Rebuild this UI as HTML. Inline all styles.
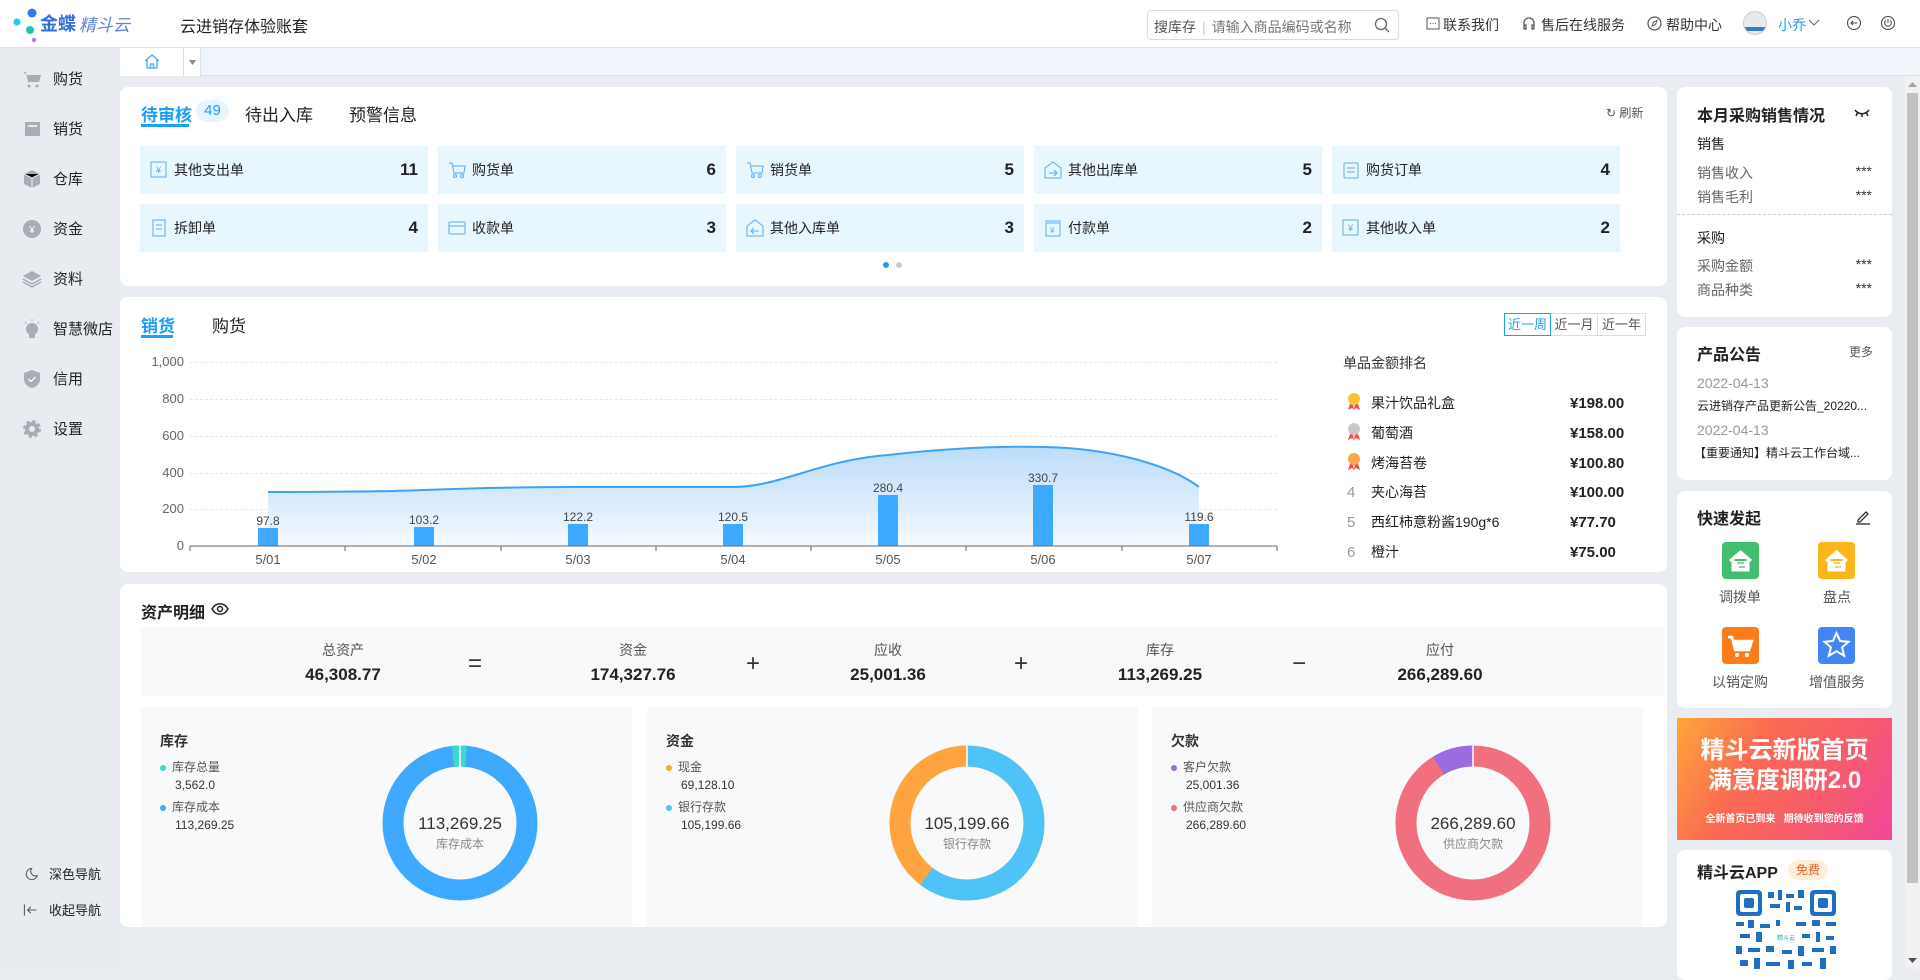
<!DOCTYPE html>
<html><head><meta charset="utf-8">
<style>
*{margin:0;padding:0;box-sizing:border-box}
body{width:1920px;height:969px;overflow:hidden;background:#e9ecf1;font-family:"Liberation Sans","Noto Sans CJK SC",sans-serif;color:#222;position:relative;font-size:14px}
.abs{position:absolute}
.hdr{left:0;top:0;width:1920px;height:48px;background:#fff;border-bottom:1px solid #dde1e6}
.side{left:0;top:48px;width:120px;height:921px;background:#e8ebf0}
.si{position:absolute;left:22px;font-size:15px;color:#222;display:flex;align-items:center}
.si svg{width:20px;height:20px;margin-right:11px}
.card{position:absolute;background:#fff;border-radius:8px}
.tile{position:absolute;width:288px;height:48px;background:#e8f6fd;display:flex;align-items:center;font-size:14px}
.tile svg{margin-left:10px;margin-right:6px}
.tile b{position:absolute;right:10px;font-size:17px;color:#222}
.ylab{position:absolute;right:1743px;font-size:13px;color:#666;text-align:right;width:50px}
.grid{position:absolute;left:190px;width:1087px;border-top:1px dashed #e3e6ee}
.rk{position:absolute;left:1343px;width:300px;height:22px;font-size:14px;display:flex;align-items:center}
.rk .n{width:28px;color:#999;font-size:15px;padding-left:4px}
.rk .p{position:absolute;left:227px;font-weight:bold;font-size:15px}
.sum{position:absolute;text-align:center;width:200px}
.sum .l{font-size:14px;color:#555}
.sum .v{font-size:17px;font-weight:bold;margin-top:5px}
.op{position:absolute;top:650px;font-size:24px;color:#333}
.pn{position:absolute;top:707px;width:491px;height:220px;background:#f8f9fa}
.pn .t{position:absolute;left:19px;top:24px;font-size:14px;font-weight:bold;color:#333}
.lg{position:absolute;left:19px;font-size:12px;color:#555}
.lg i{display:inline-block;width:6px;height:6px;border-radius:50%;margin-right:6px;vertical-align:middle}
.lv{position:absolute;left:34px;font-size:12px;color:#333}
.rt{position:absolute;left:1697px;font-size:14px;color:#666}
.st{position:absolute;right:48px;font-size:14px;color:#333}
.qi{position:absolute;width:37px;height:37px;border-radius:4px}
.ql{position:absolute;width:90px;text-align:center;font-size:14px;color:#555}
</style></head><body>
<div class="abs hdr">
  <svg class="abs" style="left:12px;top:8px" width="30" height="36"><circle cx="20" cy="5" r="4.5" fill="#2f7cf6"/><circle cx="5" cy="14" r="3.5" fill="#22ccee"/><circle cx="18" cy="22" r="4" fill="#18c3b8"/><circle cx="22" cy="32" r="2.2" fill="#a47cf7"/></svg>
  <div class="abs" style="left:40px;top:10px;font-size:18px;font-weight:bold;color:#2f6fdc">金蝶</div>
  <div class="abs" style="left:79px;top:11px;font-size:17px;color:#5b86d8;font-style:italic">精斗云</div>
  <div class="abs" style="left:180px;top:13px;font-size:16px;color:#222">云进销存体验账套</div>
  <div class="abs" style="left:1147px;top:10px;width:252px;height:30px;border:1px solid #d8dbe0;border-radius:4px;font-size:14px;color:#555;padding:6px 6px">搜库存<span style="color:#ccc;margin:0 6px">|</span><span style="color:#777">请输入商品编码或名称</span>
    <svg class="abs" style="right:8px;top:6px" width="16" height="16"><circle cx="7" cy="7" r="5.5" stroke="#666" stroke-width="1.3" fill="none"/><path d="M11 11l4 4" stroke="#666" stroke-width="1.3"/></svg></div>
  <svg class="abs" style="left:1426px;top:17px" width="14" height="14"><rect x="1" y="1" width="12" height="11" stroke="#555" fill="none"/><path d="M4 6.5h1M6.5 6.5h1M9 6.5h1" stroke="#555"/></svg>
  <div class="abs" style="left:1443px;top:15px;font-size:14px;color:#333">联系我们</div>
  <svg class="abs" style="left:1522px;top:16px" width="14" height="16"><path d="M2 9V7a5 5 0 0110 0v2M2 9h2v4H2zM10 9h2v4h-2z" stroke="#555" fill="none" stroke-width="1.3"/></svg>
  <div class="abs" style="left:1541px;top:15px;font-size:14px;color:#333">售后在线服务</div>
  <svg class="abs" style="left:1647px;top:16px" width="15" height="15"><circle cx="7.5" cy="7.5" r="6.5" stroke="#555" fill="none" stroke-width="1.2"/><path d="M5 10l1.5-4 3.5-1.5-1.5 4z" stroke="#555" fill="none"/></svg>
  <div class="abs" style="left:1666px;top:15px;font-size:14px;color:#333">帮助中心</div>
  <div class="abs" style="left:1743px;top:11px;width:24px;height:24px;border-radius:50%;background:#e6e9ee;border:1px solid #ccc;overflow:hidden"><div style="margin-top:15px;height:4px;background:#3a78c8"></div></div>
  <div class="abs" style="left:1778px;top:15px;font-size:14px;color:#1a9ef5">小乔</div>
  <svg class="abs" style="left:1808px;top:19px" width="12" height="8"><path d="M1 1l5 5 5-5" stroke="#666" fill="none"/></svg>
  <svg class="abs" style="left:1846px;top:15px" width="16" height="16"><circle cx="8" cy="8" r="6.5" stroke="#444" fill="none"/><path d="M11 8H5M7 6L5 8l2 2" stroke="#444" fill="none"/></svg>
  <svg class="abs" style="left:1880px;top:15px" width="16" height="16"><circle cx="8" cy="8" r="6.5" stroke="#444" fill="none"/><path d="M8 4v4M5.7 5.5a3.3 3.3 0 104.6 0" stroke="#444" fill="none"/></svg>
</div>
<div class="abs side"></div>
<div class="si" style="top:68px"><svg viewBox="0 0 20 20"><path d="M1 3h3l2 10h11l2-7H5" fill="#a6adb4"/><circle cx="7" cy="17" r="1.5" fill="#a6adb4"/><circle cx="15" cy="17" r="1.5" fill="#a6adb4"/></svg>购货</div>
<div class="si" style="top:118px"><svg viewBox="0 0 20 20"><rect x="3" y="3" width="15" height="14" fill="#a6adb4"/><rect x="6" y="6" width="9" height="2" fill="#e8ebf0"/></svg>销货</div>
<div class="si" style="top:168px"><svg viewBox="0 0 20 20"><path d="M10 1l8 4v10l-8 4-8-4V5z" fill="#a6adb4"/><path d="M2 5l8 4 8-4M10 9v10" stroke="#e8ebf0"/></svg>仓库</div>
<div class="si" style="top:218px"><svg viewBox="0 0 20 20"><circle cx="10" cy="10" r="9" fill="#a6adb4"/><text x="10" y="14" font-size="10" fill="#fff" text-anchor="middle">¥</text></svg>资金</div>
<div class="si" style="top:268px"><svg viewBox="0 0 20 20"><path d="M10 2l9 5-9 5-9-5z" fill="#a6adb4"/><path d="M1 10l9 5 9-5M1 13l9 5 9-5" stroke="#a6adb4" fill="none" stroke-width="1.5"/></svg>资料</div>
<div class="si" style="top:318px"><svg viewBox="0 0 20 20"><circle cx="10" cy="10" r="6" fill="#a6adb4"/><rect x="7" y="14" width="6" height="5" fill="#a6adb4"/><path d="M10 0v2M3 3l1.5 1.5M17 3l-1.5 1.5" stroke="#a6adb4"/></svg>智慧微店</div>
<div class="si" style="top:368px"><svg viewBox="0 0 20 20"><path d="M10 1l8 3v6c0 5-4 8-8 9-4-1-8-4-8-9V4z" fill="#a6adb4"/><path d="M6.5 10l2.5 2.5 4.5-4.5" stroke="#fff" fill="none" stroke-width="1.3"/></svg>信用</div>
<div class="si" style="top:418px"><svg viewBox="0 0 20 20"><circle cx="10" cy="10" r="7" fill="#a6adb4" stroke="#a6adb4" stroke-width="4" stroke-dasharray="3 2.5"/><circle cx="10" cy="10" r="3" fill="#e8ebf0"/></svg>设置</div>
<div class="si" style="top:864px;font-size:13px"><svg viewBox="0 0 20 20" style="width:16px;height:16px"><path d="M12 3a7 7 0 107 9 6 6 0 01-7-9z" stroke="#555" fill="none" stroke-width="1.3"/></svg>深色导航</div>
<div class="si" style="top:900px;font-size:13px"><svg viewBox="0 0 20 20" style="width:16px;height:16px"><path d="M3 3v14M18 10H7M11 6l-4 4 4 4" stroke="#555" fill="none" stroke-width="1.3"/></svg>收起导航</div>
<div class="abs" style="left:120px;top:48px;width:1800px;height:28px;background:#f0f5fc;border-bottom:1px solid #dde1e6"></div>
<div class="abs" style="left:120px;top:48px;width:64px;height:28px;background:#fff;border-right:1px solid #dde1e6"><svg class="abs" style="left:24px;top:6px" width="16" height="15"><path d="M1 7l7-6 7 6M3 6v8h10V6M6.5 14v-4h3v4" stroke="#3aa6f5" fill="none" stroke-width="1.2"/></svg></div>
<div class="abs" style="left:184px;top:48px;width:17px;height:28px;background:#fff;border-right:1px solid #dde1e6"><svg class="abs" style="left:5px;top:12px" width="7" height="5"><path d="M0 0h7L3.5 5z" fill="#888"/></svg></div>
<div class="card" style="left:120px;top:87px;width:1547px;height:199px"></div>
<div class="abs" style="left:141px;top:101px;font-size:17px;color:#1a9ef5;font-weight:bold">待审核</div>
<div class="abs" style="left:141px;top:124px;width:48px;height:3px;background:#1aa3f5"></div>
<div class="abs" style="left:196px;top:100px;width:33px;height:22px;border-radius:11px;background:#e8f5fe;color:#1a9ef5;font-size:15px;text-align:center;line-height:22px">49</div>
<div class="abs" style="left:245px;top:101px;font-size:17px;color:#222">待出入库</div>
<div class="abs" style="left:349px;top:101px;font-size:17px;color:#222">预警信息</div>
<div class="abs" style="left:1606px;top:104px;font-size:12px;color:#555">&#8635; 刷新</div>
<div class="tile" style="left:140px;top:146px"><svg width="18" height="18"><rect x="1" y="1" width="15" height="15" stroke="#5aaef0" fill="none"/><text x="6" y="12" font-size="9" fill="#5aaef0">¥</text></svg>其他支出单<b>11</b></div>
<div class="tile" style="left:438px;top:146px"><svg width="18" height="18"><path d="M1 2h3l2 10h10l1-7H5" stroke="#5aaef0" fill="none"/><circle cx="7" cy="15" r="1.5" stroke="#5aaef0" fill="none"/><circle cx="14" cy="15" r="1.5" stroke="#5aaef0" fill="none"/></svg>购货单<b>6</b></div>
<div class="tile" style="left:736px;top:146px"><svg width="18" height="18"><path d="M1 2h3l2 10h10l1-7H5" stroke="#5aaef0" fill="none"/><circle cx="7" cy="15" r="1.5" stroke="#5aaef0" fill="none"/><circle cx="14" cy="15" r="1.5" stroke="#5aaef0" fill="none"/></svg>销货单<b>5</b></div>
<div class="tile" style="left:1034px;top:146px"><svg width="18" height="18"><path d="M1 7l8-6 8 6v10H1z" stroke="#5aaef0" fill="none"/><path d="M5 12h8M10 9l3 3-3 3" stroke="#5aaef0" fill="none"/></svg>其他出库单<b>5</b></div>
<div class="tile" style="left:1332px;top:146px"><svg width="18" height="18"><rect x="2" y="2" width="14" height="15" rx="1" stroke="#5aaef0" fill="none"/><path d="M5 7h8M5 11h8" stroke="#5aaef0"/></svg>购货订单<b>4</b></div>
<div class="tile" style="left:140px;top:204px"><svg width="18" height="18"><rect x="3" y="1" width="12" height="16" stroke="#5aaef0" fill="none"/><path d="M6 6h6M6 10h6" stroke="#5aaef0"/></svg>拆卸单<b>4</b></div>
<div class="tile" style="left:438px;top:204px"><svg width="18" height="18"><rect x="1" y="3" width="16" height="12" rx="1" stroke="#5aaef0" fill="none"/><path d="M1 7h16" stroke="#5aaef0"/></svg>收款单<b>3</b></div>
<div class="tile" style="left:736px;top:204px"><svg width="18" height="18"><path d="M1 7l8-6 8 6v10H1z" stroke="#5aaef0" fill="none"/><path d="M13 12H5M8 9l-3 3 3 3" stroke="#5aaef0" fill="none"/></svg>其他入库单<b>3</b></div>
<div class="tile" style="left:1034px;top:204px"><svg width="18" height="18"><rect x="2" y="4" width="14" height="13" stroke="#5aaef0" fill="none"/><path d="M1 2h16" stroke="#5aaef0"/><text x="6" y="14" font-size="8" fill="#5aaef0">¥</text></svg>付款单<b>2</b></div>
<div class="tile" style="left:1332px;top:204px"><svg width="18" height="18"><rect x="1" y="1" width="15" height="15" stroke="#5aaef0" fill="none"/><text x="6" y="12" font-size="9" fill="#5aaef0">¥</text></svg>其他收入单<b>2</b></div>
<div class="abs" style="left:883px;top:262px;width:6px;height:6px;border-radius:50%;background:#1a9ef5"></div>
<div class="abs" style="left:896px;top:262px;width:6px;height:6px;border-radius:50%;background:#ccc"></div>
<div class="card" style="left:120px;top:297px;width:1547px;height:275px"></div>
<div class="abs" style="left:141px;top:312px;font-size:17px;color:#1a9ef5;font-weight:bold">销货</div>
<div class="abs" style="left:141px;top:335px;width:32px;height:3px;background:#1aa3f5"></div>
<div class="abs" style="left:212px;top:312px;font-size:17px;color:#222">购货</div>
<div class="grid" style="top:362px"></div><div class="grid" style="top:399px"></div><div class="grid" style="top:436px"></div><div class="grid" style="top:473px"></div><div class="grid" style="top:509px"></div>
<div class="ylab" style="top:354px;left:134px">1,000</div>
<div class="ylab" style="top:391px;left:134px">800</div>
<div class="ylab" style="top:428px;left:134px">600</div>
<div class="ylab" style="top:465px;left:134px">400</div>
<div class="ylab" style="top:501px;left:134px">200</div>
<div class="ylab" style="top:538px;left:134px">0</div>
<svg class="abs" style="left:0;top:0" width="1300" height="572">
<defs><linearGradient id="ag" x1="0" y1="0" x2="0" y2="1"><stop offset="0" stop-color="#bcdcfa"/><stop offset="1" stop-color="#f4f9ff"/></linearGradient></defs>
<path d="M268 492 C 350 492, 400 491, 424 490 C 480 488, 520 487, 578 487 L 733 487 C 780 487, 820 460, 888 455 C 950 448, 1000 446, 1043 447 C 1110 448, 1170 465, 1199 487 L1199 546 L268 546Z" fill="url(#ag)"/>
<path d="M268 492 C 350 492, 400 491, 424 490 C 480 488, 520 487, 578 487 L 733 487 C 780 487, 820 460, 888 455 C 950 448, 1000 446, 1043 447 C 1110 448, 1170 465, 1199 487" stroke="#3ea2f5" stroke-width="2" fill="none"/>
<g fill="#3fa9ff">
<rect x="258" y="528" width="20" height="18"/><rect x="414" y="527" width="20" height="19"/><rect x="568" y="524" width="20" height="22"/><rect x="723" y="524" width="20" height="22"/><rect x="878" y="495" width="20" height="51"/><rect x="1033" y="485" width="20" height="61"/><rect x="1189" y="524" width="20" height="22"/>
</g>
<g font-size="12" fill="#444" text-anchor="middle" font-family="Liberation Sans">
<text x="268" y="525">97.8</text><text x="424" y="524">103.2</text><text x="578" y="521">122.2</text><text x="733" y="521">120.5</text><text x="888" y="492">280.4</text><text x="1043" y="482">330.7</text><text x="1199" y="521">119.6</text>
</g>
<path d="M190 546H1277" stroke="#666"/>
<g stroke="#666"><path d="M190 546v5M345 546v5M501 546v5M656 546v5M811 546v5M966 546v5M1122 546v5M1277 546v5"/></g>
<g font-size="13" fill="#555" text-anchor="middle" font-family="Liberation Sans">
<text x="268" y="564">5/01</text><text x="424" y="564">5/02</text><text x="578" y="564">5/03</text><text x="733" y="564">5/04</text><text x="888" y="564">5/05</text><text x="1043" y="564">5/06</text><text x="1199" y="564">5/07</text>
</g>
</svg>
<div class="abs" style="left:1504px;top:313px;width:142px;height:23px;border:1px solid #ddd;font-size:13px;color:#555;display:flex">
<div style="width:47px;border:1px solid #1aa3f5;color:#1a9ef5;text-align:center;line-height:21px;margin:-1px 0 -1px -1px">近一周</div><div style="width:47px;border-right:1px solid #ddd;text-align:center;line-height:21px">近一月</div><div style="width:47px;text-align:center;line-height:21px">近一年</div></div>
<div class="abs" style="left:1343px;top:353px;font-size:14px;color:#333">单品金额排名</div>
<div class="rk" style="top:392px"><span class="n"><svg width="14" height="18"><path d="M3 12l-2 6 4-2 2 2 1-6zM11 12l2 6-4-2-2 2-1-6z" fill="#f04d4d"/><circle cx="7" cy="7" r="6" fill="#f7c52f"/></svg></span>果汁饮品礼盒<span class="p">¥198.00</span></div>
<div class="rk" style="top:422px"><span class="n"><svg width="14" height="18"><path d="M3 12l-2 6 4-2 2 2 1-6zM11 12l2 6-4-2-2 2-1-6z" fill="#f04d4d"/><circle cx="7" cy="7" r="6" fill="#c8c8c8"/></svg></span>葡萄酒<span class="p">¥158.00</span></div>
<div class="rk" style="top:452px"><span class="n"><svg width="14" height="18"><path d="M3 12l-2 6 4-2 2 2 1-6zM11 12l2 6-4-2-2 2-1-6z" fill="#f04d4d"/><circle cx="7" cy="7" r="6" fill="#f5a84a"/></svg></span>烤海苔卷<span class="p">¥100.80</span></div>
<div class="rk" style="top:481px"><span class="n">4</span>夹心海苔<span class="p">¥100.00</span></div>
<div class="rk" style="top:511px"><span class="n">5</span>西红柿意粉酱190g*6<span class="p">¥77.70</span></div>
<div class="rk" style="top:541px"><span class="n">6</span>橙汁<span class="p">¥75.00</span></div>
<div class="card" style="left:120px;top:584px;width:1547px;height:343px"></div>
<div class="abs" style="left:141px;top:599px;font-size:16px;font-weight:bold;color:#222">资产明细</div>
<svg class="abs" style="left:211px;top:602px" width="18" height="14"><path d="M1 7c4-7 12-7 16 0-4 7-12 7-16 0z" stroke="#222" fill="none" stroke-width="1.5"/><circle cx="9" cy="7" r="2.5" stroke="#222" fill="none" stroke-width="1.5"/></svg>
<div class="abs" style="left:141px;top:627px;width:1524px;height:69px;background:#f8f9fa"></div>
<div class="sum" style="left:243px;top:640px"><div class="l">总资产</div><div class="v">46,308.77</div></div>
<div class="op" style="left:468px">=</div>
<div class="sum" style="left:533px;top:640px"><div class="l">资金</div><div class="v">174,327.76</div></div>
<div class="op" style="left:746px">+</div>
<div class="sum" style="left:788px;top:640px"><div class="l">应收</div><div class="v">25,001.36</div></div>
<div class="op" style="left:1014px">+</div>
<div class="sum" style="left:1060px;top:640px"><div class="l">库存</div><div class="v">113,269.25</div></div>
<div class="op" style="left:1292px">−</div>
<div class="sum" style="left:1340px;top:640px"><div class="l">应付</div><div class="v">266,289.60</div></div>
<div class="pn" style="left:141px"><div class="t">库存</div>
<div class="lg" style="top:51px"><i style="background:#3fd8cd"></i>库存总量</div><div class="lv" style="top:71px">3,562.0</div>
<div class="lg" style="top:91px"><i style="background:#3fa9ff"></i>库存成本</div><div class="lv" style="top:111px">113,269.25</div></div>
<div class="pn" style="left:647px"><div class="t">资金</div>
<div class="lg" style="top:51px"><i style="background:#ffa53f"></i>现金</div><div class="lv" style="top:71px">69,128.10</div>
<div class="lg" style="top:91px"><i style="background:#4fc3f7"></i>银行存款</div><div class="lv" style="top:111px">105,199.66</div></div>
<div class="pn" style="left:1152px"><div class="t">欠款</div>
<div class="lg" style="top:51px"><i style="background:#9b6ce0"></i>客户欠款</div><div class="lv" style="top:71px">25,001.36</div>
<div class="lg" style="top:91px"><i style="background:#f0707f"></i>供应商欠款</div><div class="lv" style="top:111px">266,289.60</div></div>
<svg class="abs" style="left:0;top:700px" width="1660" height="227">
<g fill="none" stroke-width="21">
<circle cx="460" cy="123" r="67" stroke="#3fa9ff"/>
<circle cx="460" cy="123" r="67" stroke="#3fd8cd" stroke-dasharray="13 421" transform="rotate(-96 460 123)"/>
<circle cx="967" cy="123" r="67" stroke="#ffa53f"/>
<circle cx="967" cy="123" r="67" stroke="#4fc3f7" stroke-dasharray="254 421" transform="rotate(-90 967 123)"/>
<circle cx="1473" cy="123" r="67" stroke="#f0707f"/>
<circle cx="1473" cy="123" r="67" stroke="#9b6ce0" stroke-dasharray="36 421" transform="rotate(-121 1473 123)"/>
</g>
<g stroke="#fff" stroke-width="1.5"><path d="M460 45v22M1473 45v22M967 45v22"/></g>
<g text-anchor="middle" font-family="Liberation Sans"><text x="460" y="129" font-size="17" fill="#333">113,269.25</text><text x="460" y="148" font-size="12" fill="#888">库存成本</text>
<text x="967" y="129" font-size="17" fill="#333">105,199.66</text><text x="967" y="148" font-size="12" fill="#888">银行存款</text>
<text x="1473" y="129" font-size="17" fill="#333">266,289.60</text><text x="1473" y="148" font-size="12" fill="#888">供应商欠款</text></g>
</svg>
<div class="card" style="left:1677px;top:87px;width:215px;height:230px"></div>
<div class="abs" style="left:1697px;top:102px;font-size:16px;font-weight:bold">本月采购销售情况</div>
<svg class="abs" style="left:1854px;top:109px" width="16" height="8"><path d="M1 1c4 5 10 5 14 0M4 3l-2 4M8 4v4M12 3l2 4" stroke="#222" fill="none" stroke-width="1.5"/></svg>
<div class="rt" style="top:134px;color:#222">销售</div>
<div class="rt" style="top:163px">销售收入</div><div class="st" style="top:163px">***</div>
<div class="rt" style="top:187px">销售毛利</div><div class="st" style="top:187px">***</div>
<div class="abs" style="left:1677px;top:214px;width:215px;border-top:1px dashed #ccc"></div>
<div class="rt" style="top:228px;color:#222">采购</div>
<div class="rt" style="top:256px">采购金额</div><div class="st" style="top:256px">***</div>
<div class="rt" style="top:280px">商品种类</div><div class="st" style="top:280px">***</div>
<div class="card" style="left:1677px;top:327px;width:215px;height:153px"></div>
<div class="abs" style="left:1697px;top:341px;font-size:16px;font-weight:bold">产品公告</div>
<div class="abs" style="left:1849px;top:343px;font-size:12px;color:#555">更多</div>
<div class="rt" style="top:375px;color:#999;font-size:14px">2022-04-13</div>
<div class="abs" style="left:1697px;top:397px;font-size:12px;color:#222">云进销存产品更新公告_20220...</div>
<div class="rt" style="top:422px;color:#999;font-size:14px">2022-04-13</div>
<div class="abs" style="left:1694px;top:444px;font-size:12px;color:#222">【重要通知】精斗云工作台域...</div>
<div class="card" style="left:1677px;top:491px;width:215px;height:217px"></div>
<div class="abs" style="left:1697px;top:505px;font-size:16px;font-weight:bold">快速发起</div>
<svg class="abs" style="left:1855px;top:509px" width="16" height="16"><path d="M3 11l8-8 2 2-8 8H3zM1 15h14" stroke="#222" fill="none" stroke-width="1.2"/></svg>
<div class="qi" style="left:1722px;top:542px;background:#41bf6f"><svg width="37" height="37"><path d="M8 19l10.5-9 10.5 9M11 17v11h15V17" stroke="#fff" stroke-width="3" fill="#fff"/><path d="M15 21h7M17 25h6" stroke="#41bf6f" stroke-width="1.2"/></svg></div>
<div class="qi" style="left:1818px;top:542px;background:#fbb61c"><svg width="37" height="37"><path d="M8 19l10.5-9 10.5 9M11 17v11h15V17" stroke="#fff" stroke-width="3" fill="#fff"/><path d="M15 21h7M17 25h6" stroke="#fbb61c" stroke-width="1.2"/></svg></div>
<div class="ql" style="left:1695px;top:587px">调拨单</div>
<div class="ql" style="left:1792px;top:587px">盘点</div>
<div class="qi" style="left:1722px;top:627px;background:#fa7d1a"><svg width="37" height="37"><path d="M6 10h4l3 13h14l3-9H11" stroke="#fff" stroke-width="2.5" fill="#fff"/><circle cx="15" cy="28" r="2" fill="#fff"/><circle cx="25" cy="28" r="2" fill="#fff"/></svg></div>
<div class="qi" style="left:1818px;top:627px;background:#4285f4"><svg width="37" height="37"><path d="M18.5 6l3.6 8 8.4.8-6.4 5.6 2 8.4-7.6-4.6-7.6 4.6 2-8.4-6.4-5.6 8.4-.8z" stroke="#fff" stroke-width="2" fill="none"/></svg></div>
<div class="ql" style="left:1695px;top:672px">以销定购</div>
<div class="ql" style="left:1792px;top:672px">增值服务</div>
<div class="abs" style="left:1677px;top:718px;width:215px;height:122px;background:linear-gradient(120deg,#fca63a 0%,#fb6a52 35%,#f55a6e 70%,#f2479b 100%);color:#fff;text-align:center;font-weight:bold">
<div style="margin-top:18px;font-size:24px;line-height:30px">精斗云新版首页</div>
<div style="font-size:24px;line-height:30px">满意度调研2.0</div>
<div style="font-size:10px;margin-top:14px">全新首页已到来&nbsp;&nbsp;&nbsp;期待收到您的反馈</div></div>
<div class="card" style="left:1677px;top:850px;width:215px;height:130px"></div>
<div class="abs" style="left:1697px;top:859px;font-size:16px;font-weight:bold">精斗云APP</div>
<div class="abs" style="left:1788px;top:860px;width:40px;height:20px;border-radius:10px;background:#fdf0d8;color:#f05a23;font-size:12px;text-align:center;line-height:20px">免费</div>
<svg class="abs" style="left:1736px;top:890px" width="100" height="79">
<rect width="100" height="79" fill="#fff"/>
<g fill="#1e6fc1">
<rect x="0" y="0" width="26" height="26" rx="4"/><rect x="74" y="0" width="26" height="26" rx="4"/>
<rect x="32" y="2" width="6" height="6"/><rect x="42" y="0" width="4" height="10"/><rect x="50" y="4" width="8" height="4"/><rect x="62" y="0" width="6" height="8"/>
<rect x="34" y="14" width="10" height="4"/><rect x="50" y="12" width="4" height="10"/><rect x="58" y="16" width="8" height="4"/>
<rect x="0" y="32" width="8" height="4"/><rect x="12" y="30" width="6" height="8"/><rect x="24" y="34" width="10" height="4"/><rect x="40" y="30" width="4" height="6"/><rect x="60" y="32" width="10" height="4"/><rect x="76" y="30" width="8" height="6"/><rect x="90" y="32" width="10" height="4"/>
<rect x="4" y="44" width="10" height="4"/><rect x="20" y="42" width="6" height="10"/><rect x="66" y="44" width="8" height="4"/><rect x="80" y="42" width="4" height="10"/><rect x="90" y="46" width="8" height="4"/>
<rect x="0" y="56" width="6" height="8"/><rect x="12" y="58" width="12" height="4"/><rect x="30" y="56" width="8" height="6"/><rect x="46" y="60" width="10" height="4"/><rect x="62" y="56" width="6" height="10"/><rect x="76" y="58" width="12" height="4"/><rect x="94" y="56" width="6" height="8"/>
<rect x="4" y="70" width="8" height="6"/><rect x="18" y="68" width="6" height="11"/><rect x="30" y="72" width="14" height="4"/><rect x="52" y="70" width="6" height="9"/><rect x="66" y="72" width="10" height="4"/><rect x="84" y="68" width="6" height="11"/>
</g>
<g fill="#fff"><rect x="4" y="4" width="18" height="18" rx="2"/><rect x="78" y="4" width="18" height="18" rx="2"/></g>
<g fill="#1e6fc1"><rect x="8" y="8" width="10" height="10" rx="2"/><rect x="82" y="8" width="10" height="10" rx="2"/></g>
<rect x="36" y="42" width="28" height="10" fill="#fff"/><text x="50" y="50" font-size="6" fill="#2aa" text-anchor="middle">精斗云</text>
</svg>
<div class="abs" style="left:1905px;top:76px;width:15px;height:893px;background:#f1f1f1"></div>
<div class="abs" style="left:1907px;top:93px;width:11px;height:790px;background:#c1c1c1"></div>
<svg class="abs" style="left:1908px;top:82px" width="9" height="6"><path d="M0 5h9L4.5 0z" fill="#a3a3a3"/></svg>
<svg class="abs" style="left:1908px;top:958px" width="9" height="6"><path d="M0 0h9L4.5 5z" fill="#505050"/></svg>
</body></html>
